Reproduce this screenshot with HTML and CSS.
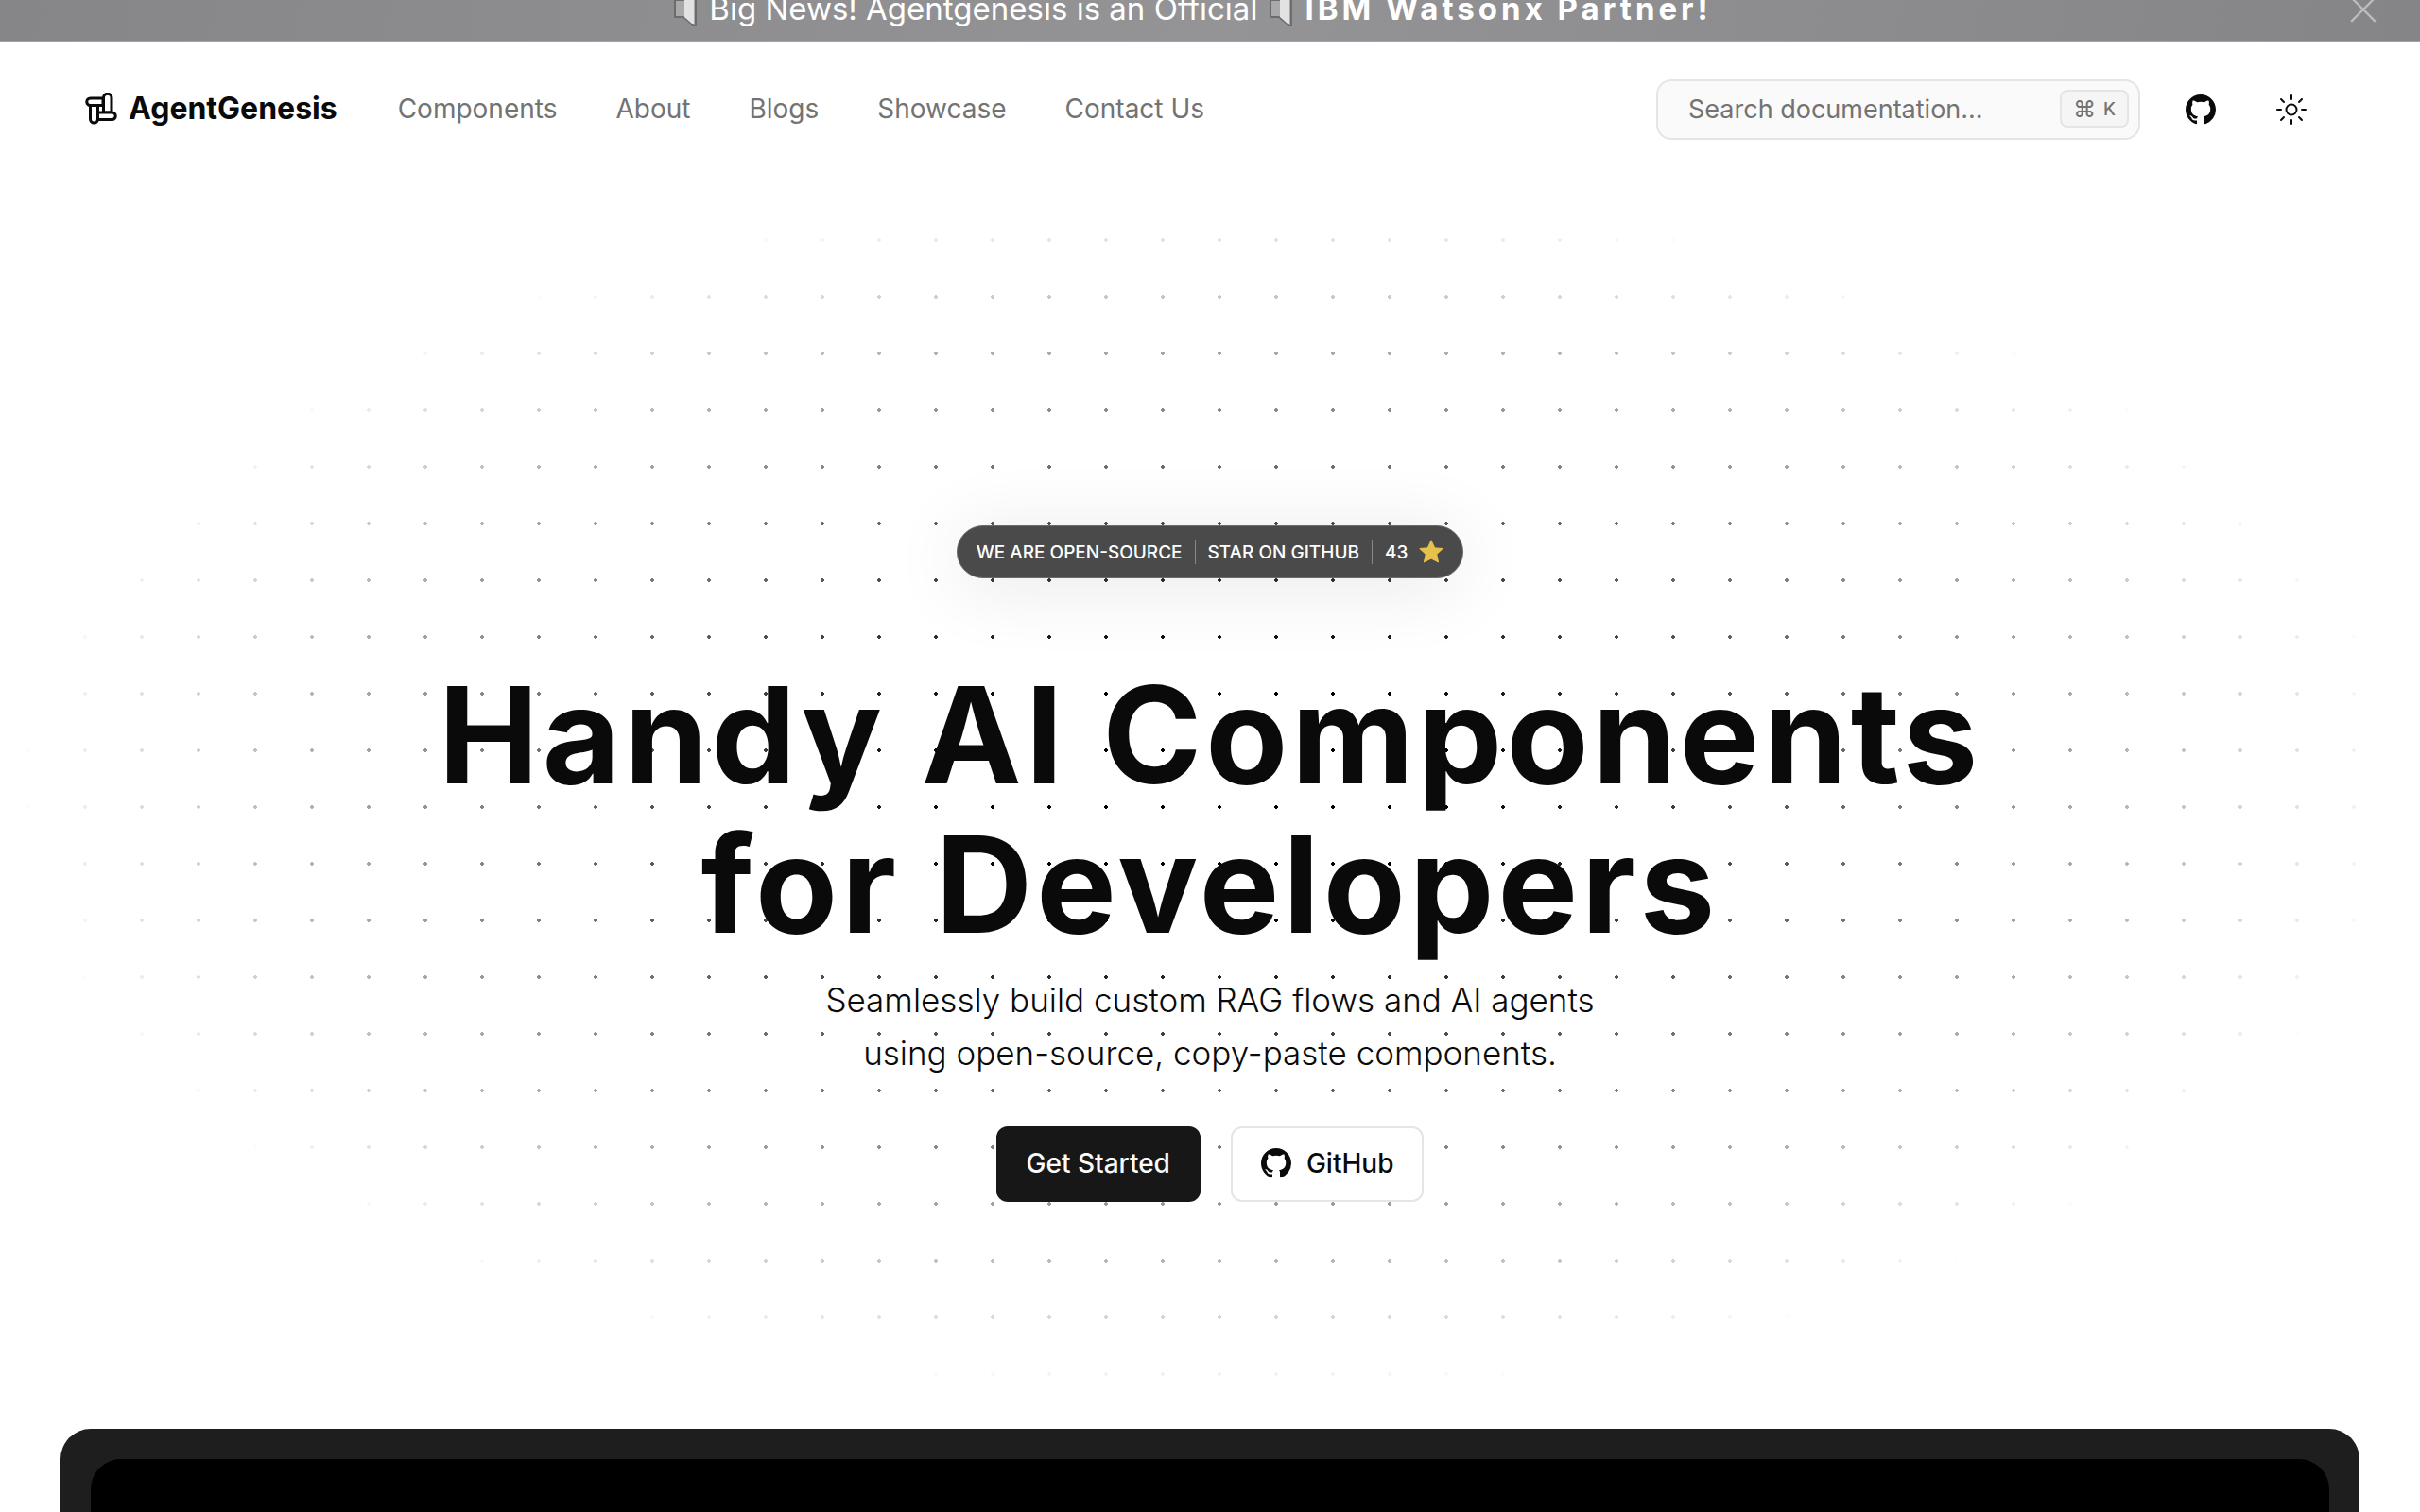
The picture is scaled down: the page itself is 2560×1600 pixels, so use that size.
FILE: index.html
```html
<!DOCTYPE html>
<html lang="en">
<head>
<meta charset="utf-8">
<meta name="viewport" content="width=device-width, initial-scale=1">
<title>AgentGenesis</title>
<link rel="stylesheet" href="styles.css">
</head>
<body>
<svg class="sprite" aria-hidden="true">
  <symbol id="github" viewBox="0 0 16 16"><path d="M8 0C3.58 0 0 3.58 0 8c0 3.54 2.29 6.53 5.47 7.59.4.07.55-.17.55-.38 0-.19-.01-.82-.01-1.49-2.01.37-2.53-.49-2.69-.94-.09-.23-.48-.94-.82-1.13-.28-.15-.68-.52-.01-.53.63-.01 1.08.58 1.23.82.72 1.21 1.87.87 2.33.66.07-.52.28-.87.51-1.07-1.78-.2-3.64-.89-3.64-3.95 0-.87.31-1.59.82-2.15-.08-.2-.36-1.02.08-2.12 0 0 .67-.21 2.2.82.64-.18 1.32-.27 2-.27s1.36.09 2 .27c1.53-1.04 2.2-.82 2.2-.82.44 1.1.16 1.92.08 2.12.51.56.82 1.27.82 2.15 0 3.07-1.87 3.75-3.65 3.95.29.25.54.73.54 1.48 0 1.07-.01 1.93-.01 2.2 0 .21.15.46.55.38A8.01 8.01 0 0 0 16 8c0-4.42-3.58-8-8-8z" fill="currentColor"/></symbol>
  <symbol id="speaker" viewBox="0 0 24 38"><path d="M1 10h9L21 1h2v36h-2L10 28H1z" fill="#a9a9aa" stroke="#6c6c6e" stroke-width="2" stroke-linejoin="round"/><path d="M11 10l8-7h2v32h-2l-8-7z" fill="#e2e2e2"/></symbol>
</svg>
<aside class="banner">
  <p class="banner-text"><svg class="speaker"><use href="#speaker"/></svg><span>Big News! Agentgenesis is an Official</span><svg class="speaker"><use href="#speaker"/></svg><strong>IBM Watsonx Partner!</strong></p>
  <button class="close" aria-label="Close"><svg viewBox="0 0 24 24"><path d="M1 1l22 22M23 1L1 23" stroke="currentColor" stroke-width="2"/></svg></button>
</aside>
<header class="header">
  <a class="brand" href="#"><svg class="logo" viewBox="0 0 34 34" fill="#fff" stroke="#0a0a0a" stroke-width="3" stroke-linejoin="round"><path d="M19 6H5.500a3.750 3.750 0 0 0 0 7.500H19z"/><path d="M5.500 13.500V28a4 4 0 0 0 8 0V13.500z"/><path d="M19.500 21V5.500a4.250 4.250 0 0 1 8.500 0V21z"/><path d="M13.500 21H28.500a3.750 3.750 0 0 1 0 7.500h-15z"/></svg>AgentGenesis</a>
  <nav class="nav">
    <a href="#">Components</a><a href="#">About</a><a href="#">Blogs</a><a href="#">Showcase</a><a href="#">Contact Us</a>
  </nav>
  <div class="tools">
    <button class="search"><span>Search documentation...</span><kbd><span class="cmd">⌘</span>K</kbd></button>
    <a class="tool" href="#" aria-label="GitHub"><svg><use href="#github"/></svg></a>
    <button class="tool" aria-label="Toggle theme"><svg viewBox="0 0 32 32" fill="none" stroke="currentColor" stroke-width="2" stroke-linecap="round"><circle cx="16" cy="16" r="5.500"/><path d="M16 1v4M16 27v4M1 16h4M27 16h4M5 5l3 3M24 24l3 3M27 5l-3 3M8 24l-3 3"/></svg></button>
  </div>
</header>
<main>
  <section class="hero">
    <a class="pill" href="#"><span>WE ARE OPEN-SOURCE</span><span>STAR ON GITHUB</span><span>43 <svg viewBox="0 0 24 24"><path d="M12 1l3.300 7 7.700.9-5.700 5.200 1.600 7.900L12 18.500 5.100 22l1.600-7.900L1 8.900 8.700 8z" fill="#e6c14c" stroke="#e6c14c" stroke-linejoin="round"/></svg></span></a>
    <h1>Handy AI Components<br>for Developers</h1>
    <p class="lead">Seamlessly build custom RAG flows and AI agents<br>using open-source, copy-paste components.</p>
    <div class="actions">
      <a class="btn primary" href="#">Get Started</a>
      <a class="btn" href="#"><svg><use href="#github"/></svg>GitHub</a>
    </div>
  </section>
  <section class="showcase"><div class="screen"></div></section>
</main>
</body>
</html>
```
FILE: styles.css
```css
* { box-sizing: border-box; }
body {
  display: flex;
  flex-direction: column;
  margin: 0;
  height: 100vh;
  overflow: hidden;
  background: #fff;
  color: #0a0a0a;
  font-family: Inter, "Liberation Sans", sans-serif;
}
a { color: inherit; text-decoration: none; }
button { font: inherit; color: inherit; }
.sprite { display: none; }

.banner {
  display: flex;
  flex: none;
  align-items: flex-end;
  justify-content: center;
  position: relative;
  height: 44px;
  padding-right: 36px;
  overflow: hidden;
  background: linear-gradient(100deg, #868688, #949496 50%, #858587);
  border-bottom: 1px solid #a3a3a5;
  color: #fff;
}
.banner-text { display: flex; align-items: center; gap: 13px; margin: 0 0 12px; font-size: 33px; line-height: 44px; white-space: nowrap; }
.banner strong { letter-spacing: 4px; }
.speaker { width: 24px; height: 38px; }
.close { position: absolute; right: 46px; top: -4px; padding: 0; border: 0; background: none; color: #bcbcbe; }
.close svg { display: block; width: 28px; height: 28px; }

.header { display: flex; flex: none; align-items: center; height: 144px; padding: 0 104px 0 90px; }
.brand { display: flex; align-items: center; gap: 12px; font-size: 32px; font-weight: 700; }
.brand, .nav { line-height: 40px; padding-bottom: 2px; }
.logo { width: 34px; height: 34px; }
.nav { display: flex; gap: 62px; margin-left: 64px; font-size: 28px; color: #737373; }
.tools { display: flex; align-items: center; gap: 32px; margin-left: auto; }
.search {
  display: flex;
  align-items: center;
  justify-content: space-between;
  width: 512px;
  height: 64px;
  padding: 0 10px 2px 32px;
  border: 2px solid #e5e5e5;
  border-radius: 16px;
  background: #fafafa;
  color: #737373;
  font-size: 27px;
}
kbd { display: flex; align-items: center; gap: 8px; height: 40px; padding: 0 12px; border: 2px solid #e5e5e5; border-radius: 8px; background: #f5f5f5; font: 500 19px Inter, sans-serif; }
.cmd { font-size: 24px; }
.tool { display: grid; place-items: center; width: 64px; height: 64px; padding: 0; border: 0; background: none; }
.tool svg { width: 32px; height: 32px; }

main { display: flex; flex: 1; flex-direction: column; min-height: 0; }
.hero { position: relative; display: flex; flex: none; flex-direction: column; align-items: center; padding: 368px 0 216px; text-align: center; }
.hero::before {
  content: "";
  position: absolute;
  inset: 0;
  z-index: -1;
  background: radial-gradient(circle, #000 2px, transparent 2px) calc(50% + 10px) 36px / 60px 60px;
  mask-image: radial-gradient(ellipse at center, #000 14%, transparent 70%);
}
.pill {
  display: flex;
  align-items: center;
  height: 56px;
  padding: 0 20px;
  border: 1px solid #6b6b6b;
  border-radius: 28px;
  background: #4a4a4a;
  color: #fff;
  font-size: 19px;
  font-weight: 500;
  box-shadow: 0 8px 80px rgb(0 0 0 / 10%);
}
.pill span + span { display: flex; align-items: center; gap: 12px; height: 26px; margin-left: 13px; padding-left: 13px; border-left: 1px solid #8a8a8a; }
.pill svg { width: 26px; height: 26px; }
h1 { margin: 86px 0 0; font-size: 142px; line-height: 158px; font-weight: 700; letter-spacing: 4px; }
.lead { margin: 16px 0 0; font-size: 35px; line-height: 56px; font-weight: 300; }
.actions { display: flex; gap: 32px; margin-top: 50px; }
.btn { display: flex; align-items: center; gap: 16px; height: 80px; padding: 0 30px 2px; border: 2px solid #e5e5e5; border-radius: 12px; background: #fff; font-size: 28px; font-weight: 500; }
.btn svg { width: 32px; height: 32px; }
.primary { border-color: #171717; background: #171717; color: #fafafa; }
.showcase { flex: 1; min-height: 0; margin: 24px 64px 0; padding: 32px 32px 0; border-radius: 32px 32px 0 0; background: #1e1e1e; }
.screen { height: 100%; border-radius: 32px 32px 0 0; background: #000; }
```
